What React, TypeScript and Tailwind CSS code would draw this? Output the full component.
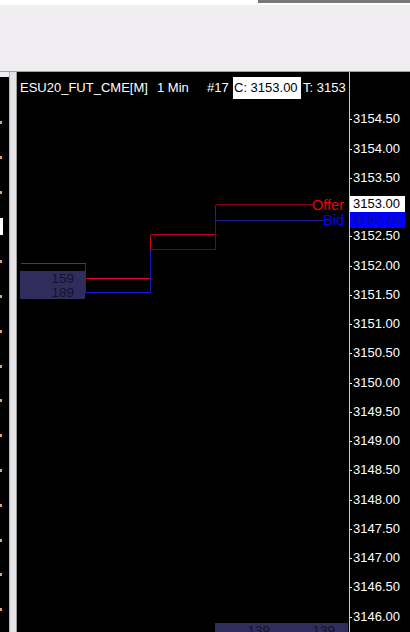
import React from "react";

const FONT = "font-['Liberation_Sans',Arial,sans-serif]";

// page y of a price label's text centre
const yOf = (p: number) => 616.5 - (p - 3146) * 58.5;

const axisPrices: number[] = [];
for (let p = 3154.5; p >= 3146; p -= 0.5) {
    if (p !== 3153) axisPrices.push(p);
}

type Seg = [number, number, number, number, string];

const segs: Seg[] = [
    // offer
    [20, 263, 85, 263, "#d4002a"],
    [85, 263, 85, 278, "#a00020"],
    [85, 278, 150, 278, "#e0002a"],
    [150, 278, 150, 234, "#d4002a"],
    [150, 234, 215, 234, "#c0002a"],
    [215, 234, 215, 204, "#90001e"],
    [215, 204, 312, 204, "#90001e"],
    // bid
    [85, 278, 85, 292, "#1a1ad8"],
    [85, 292, 150, 292, "#1a1ad8"],
    [150, 292, 150, 249, "#1818b0"],
    [150, 249, 215, 249, "#181890"],
    [215, 249, 215, 220, "#1c1c90"],
    [215, 220, 324, 220, "#1c1c90"],
];

const leftMarks = Array.from({ length: 15 }, (_, i) => 122 + i * 34.8);

const LeftPanel: React.FC = () => (
    <div className="w-[9px] shrink-0 border-t-[5px] border-[#f0eef1] bg-black relative">
        {leftMarks.map((y, i) =>
            i === 3 ? (
                <div
                    key={i}
                    className="absolute left-0 w-[3px] h-[17px] bg-white"
                    style={{ top: y - 77 - 8 }}
                />
            ) : (
                <div
                    key={i}
                    className="absolute left-0 w-[2px] h-[3px] bg-[#e8a470]"
                    style={{ top: y - 77 - 1 }}
                />
            )
        )}
    </div>
);

const Plot: React.FC = () => (
    <div className="relative w-[333px] shrink-0 border-r border-[#c8c8c8] overflow-hidden">
        <div className="relative z-10 mt-[5px] h-[22px] flex items-center leading-[22px] text-white text-[13px] whitespace-pre pl-[3px]">
            <span className="w-[137px] shrink-0">ESU20_FUT_CME[M]</span>
            <span className="w-[50px] shrink-0">1 Min</span>
            <span className="w-[26px] shrink-0">#17</span>
            <span className="w-[68px] shrink-0 bg-white text-black pl-px">C: 3153.00</span>
            <span className="shrink-0 pl-[2px]">T: 3153</span>
        </div>

        <svg className="absolute inset-0" width={332} height={560}>
            <g transform="translate(-17 -72)">
                {segs.map(([x1, y1, x2, y2, c], i) => (
                    <line
                        key={i}
                        x1={x1 + 0.5}
                        y1={y1 + 0.5}
                        x2={x2 + 0.5}
                        y2={y2 + 0.5}
                        stroke={c}
                        strokeWidth={1}
                        shapeRendering="crispEdges"
                    />
                ))}
            </g>
        </svg>

        {/* volume cell, first bar */}
        <div className="absolute left-[3px] top-[199px] w-[65px] h-[28px] bg-[#302c5c] flex flex-col items-end pr-[11px] pt-px text-[13.5px] leading-[14px] text-[#14142a]">
            <span>159</span>
            <span>189</span>
        </div>

        {/* volume cells at the bottom */}
        <div className="absolute left-[198px] top-[551px] w-[133px] h-[20px] bg-[#302c5c] flex text-[13.5px] leading-[16px] text-[#14142a]">
            <span className="w-[65px] text-right pr-[10px]">139</span>
            <span className="w-[65px] text-right pr-[10px]">139</span>
        </div>

        <span className="absolute right-[5px] top-[125px] text-[14.5px] leading-[17px] text-[#f00000]">Offer</span>
        <span className="absolute right-[5px] top-[140px] text-[14.5px] leading-[17px] text-[#0000ff]">Bid</span>
    </div>
);

const Axis: React.FC = () => (
    <div className="relative flex-1 text-[13px] leading-[16px] text-white">
        {axisPrices.map((p) => (
            <div
                key={p}
                className="absolute left-0 flex items-center h-[16px]"
                style={{ top: Math.round(yOf(p) - 8 - 72) }}
            >
                <span className="w-[2px] h-px bg-white" />
                <span className="ml-px">{p.toFixed(2)}</span>
            </div>
        ))}
        <div className="absolute left-0 top-[124px] w-[55px] h-[16px] bg-white text-black pl-[3px]">3153.00</div>
        <div className="absolute left-0 top-[140px] w-[55px] h-[16px] bg-[#0000ff] text-[#10107a] pl-[3px]">3152.75</div>
    </div>
);

export default function App() {
    return (
        <div className={`w-[410px] h-[632px] overflow-hidden flex flex-col bg-[#f0eef1] ${FONT}`}>
            <div className="h-[5px] shrink-0 bg-white flex justify-end">
                <div className="w-[152px] h-[3px] bg-[#787878]" />
            </div>
            <div className="h-[67px] shrink-0 bg-[#f0eef1] border-b border-[#a0a0a0]" />
            <div className="flex flex-1 min-h-0">
                <LeftPanel />
                <div className="w-[8px] shrink-0 bg-[#e4e4e8] border-l border-[#b4b4b4] border-r border-r-[#9c9c9c]" />
                <div className="flex flex-1 bg-black">
                    <Plot />
                    <Axis />
                </div>
            </div>
        </div>
    );
}
